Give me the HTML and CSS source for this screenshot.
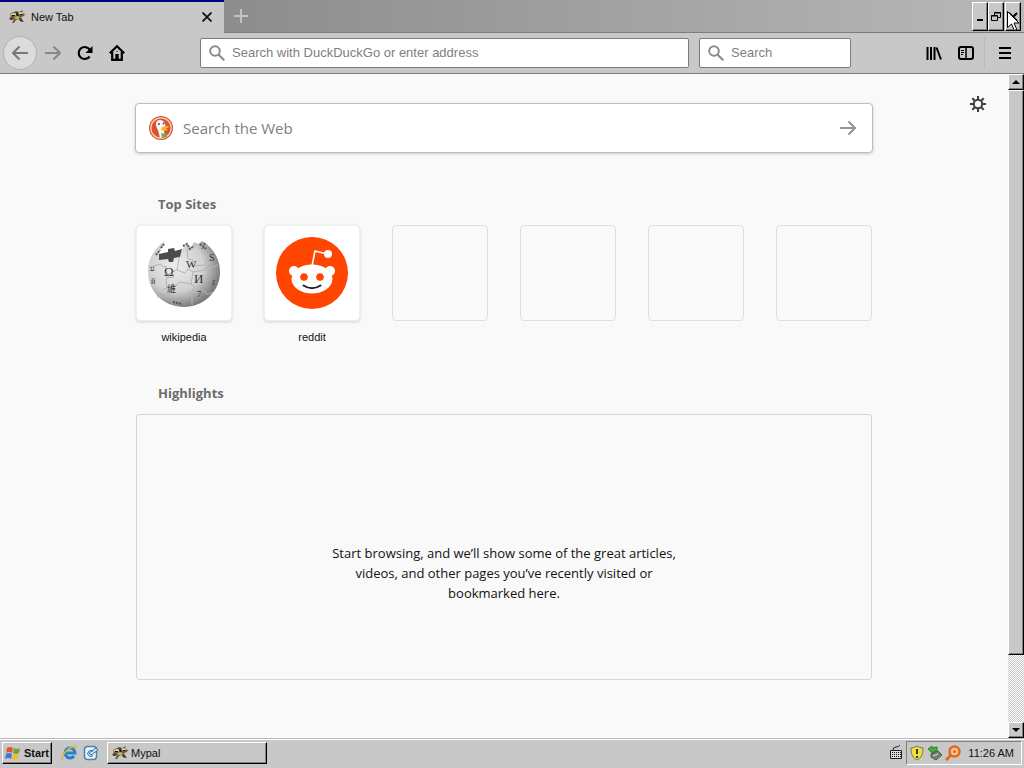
FILE: index.html
```
<!DOCTYPE html>
<html lang="en">

<head>
    <meta charset="UTF-8">
    <meta name="viewport" content="width=device-width, initial-scale=1.0">
    <title>New Tab</title>
    <link rel="stylesheet" href="styles.css">
</head>

<body>
    <svg class="defs" aria-hidden="true">
        <symbol id="mypal" viewBox="0 0 16 16">
            <path d="M0 10l2-3-1-2 4-2 2-1 3 1 4-2-1 3 3 1-1 2-3 1 1 2 2 3h-3l-2-3-3 1-2 3H3l2-4-3 1z" fill="#6b5b3a" />
            <path d="M2 5l4-1 2 2-3 1-3-1zM9 4l3-1 2 2-3 1z" fill="#e6dcae" />
            <path d="M5 8l3-1 3 1-1 2H6z" fill="#c2aa68" />
            <path d="M3 6h3v1H3zM8 3l2 3-2 1-1-2zM11 5h2v1h-2zM1 10l3-1-1 2zM10 9l3 3h-2z" fill="#17130d" />
        </symbol>
        <symbol id="magnifier" viewBox="0 0 16 16">
            <circle cx="6" cy="6" r="4.8" fill="none" stroke="#8c8c8c" stroke-width="2" />
            <path d="M9.5 9.5l5.8 5.8" stroke="#8c8c8c" stroke-width="2.2" />
        </symbol>
        <symbol id="arrow" viewBox="0 0 16 16">
            <path d="M0 8h15M8.5 1.5L15 8l-6.5 6.5" fill="none" stroke="currentColor" stroke-width="2" />
        </symbol>
    </svg>

    <header class="tab-bar">
        <div class="tab">
            <svg class="icon"><use href="#mypal" /></svg>
            <span class="tab-title">New Tab</span>
            <button class="tab-close" aria-label="Close tab">
                <svg viewBox="0 0 10 10" width="10" height="10"><path d="M.5.5l9 9M9.5.5l-9 9" stroke="#111" stroke-width="1.8" /></svg>
            </button>
        </div>
        <button class="tab-new" aria-label="New tab">
            <svg viewBox="0 0 14 14" width="14" height="14"><path d="M7 0v14M0 7h14" stroke="#c4c4c4" stroke-width="2" /></svg>
        </button>
        <div class="window-buttons">
            <button class="raised" aria-label="Minimize">
                <svg viewBox="0 0 12 12" width="12" height="12"><path d="M3 9h6" stroke="#000" stroke-width="2" /></svg>
            </button>
            <button class="raised" aria-label="Restore">
                <svg viewBox="0 0 12 12" width="12" height="12"><path d="M4.5 4V1.5h6v5H8M4 2h7M1.5 4.5h6v5h-6zM1 5h7" fill="none" stroke="#000" /></svg>
            </button>
            <button class="raised close" aria-label="Close">
                <svg viewBox="0 0 12 12" width="12" height="12"><path d="M2 2l8 8M10 2l-8 8" stroke="#000" stroke-width="2" /></svg>
            </button>
            <svg class="cursor" viewBox="0 0 13 21" width="13" height="21"><path d="M.5.5v16l4-3.5 2.800 6.500 2.500-1-2.800-6.500h5z" fill="#fff" stroke="#000" /></svg>
        </div>
    </header>

    <nav class="nav-bar">
        <button class="nav-button back" aria-label="Back">
            <svg class="icon flip"><use href="#arrow" /></svg>
        </button>
        <button class="nav-button forward" aria-label="Forward">
            <svg class="icon"><use href="#arrow" /></svg>
        </button>
        <button class="nav-button" aria-label="Reload">
            <svg class="icon" viewBox="0 0 16 16"><path d="M12.600 11.500A6 6 0 1 1 12.600 4.500" fill="none" stroke="#000" stroke-width="2.200" /><path d="M15.500 1v7H8.500z" /></svg>
        </button>
        <button class="nav-button" aria-label="Home">
            <svg class="icon" viewBox="0 0 16 16"><path d="M.8 8.300L8 1.200l7.200 7.100M3.200 7v7.900h9.600V7" fill="none" stroke="#000" stroke-width="2.200" /><path d="M6.300 9h3.400v6H6.300z" /><path d="M7.500 6h1v1h-1z" /></svg>
        </button>
        <label class="field address">
            <svg class="icon"><use href="#magnifier" /></svg>
            <input type="text" placeholder="Search with DuckDuckGo or enter address" aria-label="Address">
        </label>
        <label class="field search">
            <svg class="icon"><use href="#magnifier" /></svg>
            <input type="text" placeholder="Search" aria-label="Search">
        </label>
        <div class="tools">
            <button class="nav-button" aria-label="Library">
                <svg class="icon" viewBox="0 0 16 16"><path d="M1.500 2v13M5 2v13M8.500 2v13M10.500 2.500l4.500 12" stroke="#000" stroke-width="2" /></svg>
            </button>
            <button class="nav-button" aria-label="Sidebars">
                <svg class="icon" viewBox="0 0 16 16"><rect x="1" y="2" width="14" height="12" rx="2" fill="none" stroke="#000" stroke-width="2" /><path d="M8 2v12" stroke="#000" stroke-width="1.500" /><path d="M3 5.500h3M3 7.500h3M3 9.500h2" stroke="#000" /></svg>
            </button>
            <button class="nav-button menu" aria-label="Menu">
                <svg class="icon" viewBox="0 0 16 16"><path d="M2 3h12M2 8h12M2 13h12" stroke="#000" stroke-width="2" /></svg>
            </button>
        </div>
    </nav>

    <div class="viewport">
        <main class="page">
            <button class="settings" aria-label="Settings">
                <svg class="icon" viewBox="0 0 16 16"><circle cx="8" cy="8" r="4.200" fill="none" stroke="#3d3d3d" stroke-width="2" /><path d="M8 0v3M8 13v3M0 8h3M13 8h3M2.300 2.300l2.200 2.200M11.500 11.500l2.200 2.200M2.300 13.700l2.200-2.200M11.500 4.500l2.200-2.200" stroke="#3d3d3d" stroke-width="2" /></svg>
            </button>
            <div class="content">
                <form class="web-search">
                    <svg viewBox="0 0 24 24" width="24" height="24">
                        <circle cx="12" cy="12" r="12" fill="#d9532f" />
                        <circle cx="12" cy="12" r="10.200" fill="none" stroke="#f6d5c9" stroke-width="1.200" />
                        <path d="M8 5c3-2 7-1 8 3l1 4-2 3 1 6-5 1-2-8C7 11 6 7 8 5z" fill="#f8f6ef" />
                        <path d="M13 11l6-1 1 1-3 2 2 1-3 1-4-1z" fill="#f6b429" />
                        <path d="M12 17l4 1 2-1v4l-5 1z" fill="#78a653" />
                        <circle cx="10" cy="8" r="1" fill="#456" />
                        <circle cx="14.500" cy="7.500" r="1" fill="#456" />
                    </svg>
                    <input type="text" placeholder="Search the Web" aria-label="Search the Web">
                    <button class="go" aria-label="Search">
                        <svg class="icon"><use href="#arrow" /></svg>
                    </button>
                </form>

                <h2 class="section-title">Top Sites</h2>
                <div class="top-sites">
                    <a class="site" href="#wikipedia">
                        <span class="tile filled">
                            <svg viewBox="0 0 74 74" width="74" height="74">
                                <defs>
                                    <radialGradient id="globe" cx="38%" cy="38%" r="65%">
                                        <stop offset="0" stop-color="#eee" />
                                        <stop offset=".6" stop-color="#d0d0d0" />
                                        <stop offset="1" stop-color="#777" />
                                    </radialGradient>
                                </defs>
                                <path d="M18 5C7 12 0 24 1 37c1 20 17 34 36 34s36-15 36-35c0-13-7-25-18-31l-4 3-4-2-3 5-5-2-4 4-2 8-9 1-8-1-4-3 3-7z" fill="url(#globe)" />
                                <path d="M12 18l9-2v-3l6-1 1 3 7-2-2 8-6 1-1 4h-4l-1-3-9 1z" fill="#4c4c4c" />
                                <path d="M2 31l12-3 2 3 3-1v8l3 2-3 3 1 9-5 2M32 22l-2 12-5 2 2 5-8 1M30 34l8 3 3-4 5 3-2 12 4 3-3 4v14M46 36l12-2 2-4 3 2 8-3M44 48l-12-2-3 4-4-2-3 12-12 1M45 57l13-2 2 4 6-3M40 12l1 11 5 1-1 6 13-1 3-10-3-4 2-7" fill="none" stroke="#b4b4b4" />
                                <g class="globe-glyphs">
                                    <text x="17" y="40" font-size="13">Ω</text>
                                    <text x="39" y="32" font-size="11">W</text>
                                    <text x="47" y="47" font-size="13">И</text>
                                    <text x="20" y="56" font-size="9">維</text>
                                    <text x="62" y="25" font-size="10">S</text>
                                    <text x="50" y="61" font-size="9">7</text>
                                    <text x="3" y="35" font-size="8">ע</text>
                                    <text x="4" y="48" font-size="8">й</text>
                                </g>
                                <path d="M36 10l4-2 3 5 4-3M9 19l4-5M14 12l3-4M53 8l6 5M58 7l-3 6M26 66l9 2M67 44l-1 6" fill="none" stroke="#555" stroke-width="2" stroke-dasharray="2 1" />
                            </svg>
                        </span>
                        <span class="site-name">wikipedia</span>
                    </a>
                    <a class="site" href="#reddit">
                        <span class="tile filled">
                            <svg viewBox="0 0 72 72" width="72" height="72">
                                <circle cx="36" cy="36" r="36" fill="#ff4500" />
                                <path d="M36 29l3-15 12 3" fill="none" stroke="#fff" stroke-width="1.600" stroke-linejoin="round" />
                                <circle cx="52" cy="17" r="4" fill="#fff" />
                                <circle cx="18" cy="34" r="5" fill="#fff" />
                                <circle cx="54" cy="34" r="5" fill="#fff" />
                                <ellipse cx="36" cy="42" rx="20.500" ry="14.500" fill="#fff" />
                                <circle cx="28" cy="40" r="3.800" fill="#ff4500" />
                                <circle cx="44" cy="40" r="3.800" fill="#ff4500" />
                                <path d="M27.500 48.500q8.500 5.500 17 0" fill="none" stroke="#222" stroke-width="2" stroke-linecap="round" />
                            </svg>
                        </span>
                        <span class="site-name">reddit</span>
                    </a>
                    <div class="tile"></div>
                    <div class="tile"></div>
                    <div class="tile"></div>
                    <div class="tile"></div>
                </div>

                <h2 class="section-title">Highlights</h2>
                <section class="highlights">
                    <p>Start browsing, and we’ll show some of the great articles, videos, and other pages you’ve recently visited or bookmarked here.</p>
                </section>
            </div>
        </main>
        <div class="scrollbar">
            <button class="raised scroll-button" aria-label="Scroll up">
                <svg viewBox="0 0 8 4" width="8" height="4"><path d="M0 4l4-4 4 4z" /></svg>
            </button>
            <div class="raised thumb"></div>
            <div class="track"></div>
            <button class="raised scroll-button" aria-label="Scroll down">
                <svg viewBox="0 0 8 4" width="8" height="4"><path d="M0 0l4 4 4-4z" /></svg>
            </button>
        </div>
    </div>

    <footer class="taskbar">
        <button class="raised start">
            <svg class="icon" viewBox="0 0 16 16">
                <path d="M2 3q3-2 6 0L7 8Q4 6 1 8z" fill="#e0592a" />
                <path d="M9 3q3 2 6 0l-1 5q-3 2-6 0z" fill="#6da53a" />
                <path d="M1 9q3-2 6 0l-1 5q-3-2-6 0z" fill="#4377cf" />
                <path d="M8 9q3 2 6 0l-1 5q-3 2-6 0z" fill="#f2bd2c" />
            </svg>
            Start
        </button>
        <div class="quick-launch">
            <a href="#ie" aria-label="Internet Explorer">
                <svg class="icon" viewBox="0 0 16 16"><path d="M13 11a5 5 0 1 1 1-3H5" fill="none" stroke="#2584d0" stroke-width="3" /><path d="M2 15C-1 13 4 6 9 3s7-2 5 1" fill="none" stroke="#e5b52e" stroke-width="1.500" /></svg>
            </a>
            <a href="#desktop" aria-label="Show desktop">
                <svg class="icon" viewBox="0 0 16 16"><rect x="1.500" y="1.500" width="12" height="13" rx="3" fill="#e8f2f8" stroke="#4c83aa" stroke-width="1.500" /><path d="M10 6.500a3 3 0 1 0 0 4M6 8l7-5 2 2-7 5z" fill="#d2e7f5" stroke="#2e6fa4" /></svg>
            </a>
        </div>
        <button class="raised task">
            <svg class="icon"><use href="#mypal" /></svg>
            Mypal
        </button>
        <svg class="icon keyboard" viewBox="0 0 16 16"><path d="M5 5q0-3 3-3t4-2" fill="none" stroke="#222" /><path d="M2.500 5.500h11v8h-11z" fill="#ddd" stroke="#222" /><path d="M4 7.500h9M4 9.500h9M4 11.500h9" stroke="#111" stroke-dasharray="1 1" /></svg>
        <div class="tray">
            <svg class="icon" viewBox="0 0 16 16"><path d="M8 1q3 2 6 2c0 7-2 10-6 12C4 13 2 10 2 3q3 0 6-2z" fill="#f4df35" stroke="#77784c" /><path d="M8 4v5M8 11v2" stroke="#333" stroke-width="2" /></svg>
            <svg class="icon" viewBox="0 0 16 16"><path d="M4 9l7-3 4 4-6 5-5-3z" fill="#777f76" stroke="#4d554c" /><path d="M6 11l5-2" stroke="#ddd" /><path d="M1 4l4-3v2l5-1v4l-4 1v2z" fill="#42ae3e" stroke="#2e7e31" /></svg>
            <svg class="icon" viewBox="0 0 16 16"><circle cx="9.500" cy="6.500" r="5" fill="#efc49c" stroke="#e56a1b" stroke-width="2.500" /><path d="M6 10l-5 5" stroke="#e56a1b" stroke-width="3" /><circle cx="9.500" cy="6.500" r="1.500" fill="#e56a1b" /></svg>
            <time class="clock">11:26 AM</time>
        </div>
    </footer>
</body>

</html>
```
FILE: styles.css
```
* {
    box-sizing: border-box;
}

body {
    display: flex;
    flex-direction: column;
    height: 100vh;
    margin: 0;
    overflow: hidden;
    background: #f9f9f9;
    color: #111;
    font: 11px/16px "Liberation Sans", Arial, sans-serif;
}

button {
    display: flex;
    align-items: center;
    justify-content: center;
    padding: 0;
    border: 0;
    background: none;
    color: inherit;
    font: inherit;
}

input {
    flex: 1;
    min-width: 0;
    padding: 0;
    border: 0;
    outline: 0;
    background: none;
    font: inherit;
}

input::placeholder {
    color: #808080;
    opacity: 1;
}

a {
    color: inherit;
    text-decoration: none;
}

svg {
    display: block;
    flex: none;
}

.defs {
    position: absolute;
    width: 0;
    height: 0;
}

.icon {
    width: 16px;
    height: 16px;
}

.flip {
    transform: scaleX(-1);
}

.raised {
    background: #c8c8c8;
    border: 1px solid;
    border-color: #fff #000 #000 #fff;
    box-shadow: inset -1px -1px #808080;
}

/* tabs */
.tab-bar {
    display: flex;
    flex: none;
    height: 33px;
    background: linear-gradient(to right, #808080, #b8b8b8);
    border-bottom: 1px solid #7c7c7c;
}

.tab {
    display: flex;
    align-items: center;
    gap: 6px;
    width: 224px;
    height: 33px;
    padding: 0 11px 2px 9px;
    background: #c8c8c8;
    border-top: 2px solid #00007c;
}

.tab-title {
    flex: 1;
}

.tab-close {
    width: 12px;
    height: 16px;
}

.tab-new {
    width: 34px;
}

.window-buttons {
    position: relative;
    display: flex;
    margin-left: auto;
    padding: 2px 3px 1px 0;
}

.window-buttons button {
    width: 16px;
}

.window-buttons .close {
    margin-left: 1px;
}

.cursor {
    position: absolute;
    top: 11px;
    right: 4px;
}

/* toolbar */
.nav-bar {
    display: flex;
    flex: none;
    align-items: center;
    height: 41px;
    padding: 0 3px;
    background: #c8c8c8;
    border-bottom: 1px solid #7c7c7c;
}

.nav-button {
    width: 32px;
    height: 32px;
}

.back {
    width: 34px;
    height: 34px;
    border: 1px solid #b0b0b0;
    border-radius: 50%;
    background: #dadcda;
    color: #777;
}

.forward {
    color: #888;
}

.field {
    display: flex;
    align-items: center;
    gap: 7px;
    height: 30px;
    padding: 0 8px;
    background: #fff;
    border: 1px solid #7c7c7c;
    border-radius: 2px;
    font-size: 13px;
}

.address {
    flex: 1;
    margin-left: 67px;
}

.search {
    width: 152px;
    margin-left: 10px;
}

.tools {
    display: flex;
    margin-left: 67px;
}

.menu {
    width: 37px;
    margin-left: 2px;
    padding-left: 3px;
    border-left: 1px solid #bcbcbc;
}

/* new tab page */
.viewport {
    display: flex;
    flex: 1;
    min-height: 0;
}

.page {
    position: relative;
    flex: 1;
    padding: 29px 0;
    overflow: hidden;
}

.settings {
    position: absolute;
    top: 22px;
    right: 22px;
}

.content {
    width: 736px;
    max-width: 100%;
    margin: 0 auto;
    font-family: "Open Sans", sans-serif;
}

.web-search {
    display: flex;
    align-items: center;
    gap: 10px;
    height: 50px;
    margin: 0 -1px;
    padding: 0 16px 0 13px;
    background: #fff;
    border: 1px solid #bdbdbd;
    border-radius: 4px;
    box-shadow: 0 1px 3px #ccc;
    font-size: 15px;
}

.go {
    color: #949494;
}

.section-title {
    margin: 41px 22px 11px;
    color: #6c6c6c;
    font-size: 13px;
    line-height: 20px;
}

.top-sites {
    display: grid;
    grid-template-columns: repeat(auto-fill, 96px);
    gap: 32px;
}

.site {
    text-align: center;
}

.site-name {
    display: block;
    margin-top: 8px;
    font-family: "Liberation Sans", Arial, sans-serif;
}

.tile {
    display: flex;
    align-items: center;
    justify-content: center;
    height: 96px;
    border: 1px solid #dedede;
    border-radius: 4px;
}

.filled {
    background: #fff;
    border-color: #eee;
    box-shadow: 0 1px 3px #d4d4d4;
}

.globe-glyphs {
    fill: #333;
    font-family: "Liberation Serif", "Noto Sans CJK TC", serif;
}

.top-sites + .section-title {
    margin-top: 38px;
}

.highlights {
    display: flex;
    align-items: center;
    justify-content: center;
    min-height: 266px;
    padding: 52px 0 0;
    border: 1px solid #d6d6d6;
    border-radius: 3px;
}

.highlights p {
    width: 350px;
    margin: 0;
    font-size: 13px;
    line-height: 20px;
    text-align: center;
}

/* scrollbar */
.scrollbar {
    display: flex;
    flex-direction: column;
    width: 16px;
}

.scroll-button {
    height: 16px;
}

.thumb {
    flex: 565;
}

.track {
    flex: 67;
    background: repeating-conic-gradient(#fff 0 25%, #c8c8c8 0 50%) 0 0 / 2px 2px;
}

/* taskbar */
.taskbar {
    display: flex;
    flex: none;
    align-items: center;
    height: 30px;
    padding: 0 2px 1px;
    background: #c8c8c8;
    border-top: 1px solid #b8b8b8;
    box-shadow: inset 0 1px #fff;
}

.start {
    gap: 3px;
    width: 50px;
    height: 22px;
    font-weight: bold;
}

.quick-launch {
    display: flex;
    gap: 6px;
    margin: 0 8px 0 9px;
}

.task {
    justify-content: flex-start;
    gap: 3px;
    width: 160px;
    height: 22px;
    padding-left: 4px;
}

.keyboard {
    margin-left: auto;
}

.tray {
    display: flex;
    align-items: center;
    gap: 2px;
    height: 24px;
    margin-left: 2px;
    padding: 0 7px 0 2px;
    border: 1px solid;
    border-color: #808080 #fff #fff #808080;
}

.clock {
    margin-left: 5px;
}
```
